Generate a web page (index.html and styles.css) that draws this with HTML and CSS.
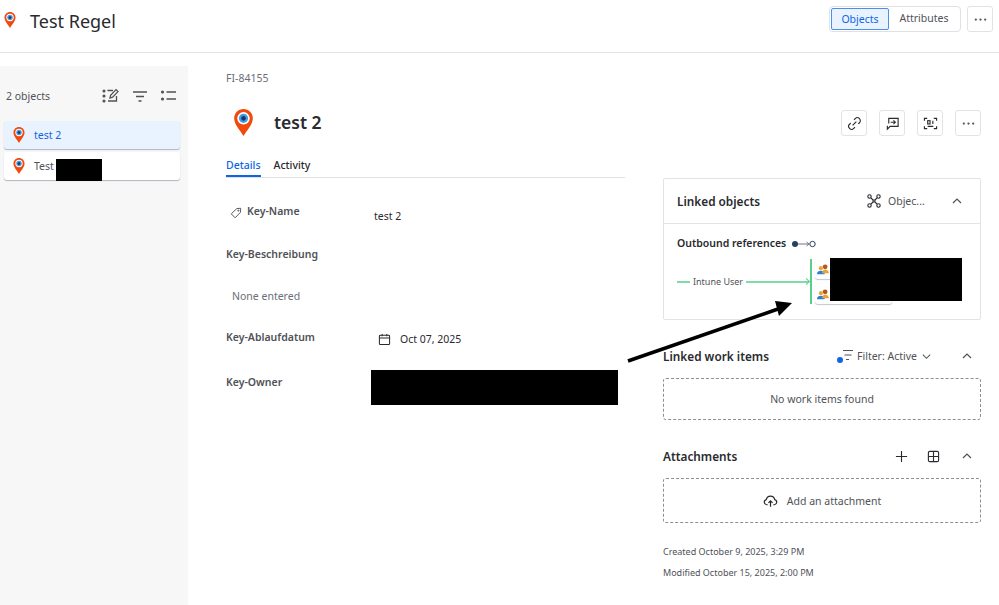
FILE: index.html
```html
<!DOCTYPE html>
<html lang="en">
<head>
  <meta charset="UTF-8" />
  <title>Test Regel</title>
  <link rel="stylesheet" href="styles.css">
</head>
<body>
  <svg class="defs" width="0" height="0">
    <symbol id="pin" viewBox="0 0 18 26">
      <path fill="#f2490c" d="M9 0C4 0 0 4 0 9c0 6 6 12 9 17 3-5 9-11 9-17 0-5-4-9-9-9z"/>
      <circle cx="9" cy="9" r="6" fill="#fff"/>
      <circle cx="9" cy="9" r="4.4" fill="#3f9be8"/>
      <circle cx="9" cy="9" r="2.2" fill="#17375e"/>
    </symbol>
    <symbol id="more" viewBox="0 0 16 16">
      <circle cx="3" cy="8" r="1.2"/><circle cx="8" cy="8" r="1.2"/><circle cx="13" cy="8" r="1.2"/>
    </symbol>
    <symbol id="up" viewBox="0 0 12 12">
      <path d="M2 8l4-4 4 4" fill="none" stroke="currentColor" stroke-width="1.2"/>
    </symbol>
    <symbol id="people" viewBox="0 0 14 12">
      <circle cx="4.5" cy="5" r="2.4" fill="#e8a33c"/>
      <path d="M0 12c0-3 2-4 4.5-4S9 9 9 12z" fill="#2f7fd0"/>
      <circle cx="9.5" cy="3.5" r="2.8" fill="#b8571a"/>
      <path d="M6 11c0-3 1.500-4.500 3.500-4.500S14 8 14 11z" fill="#e8a33c"/>
    </symbol>
  </svg>

  <header class="topbar">
    <div class="topbar-title">
      <svg class="pin-small"><use href="#pin"/></svg>
      <h1>Test Regel</h1>
    </div>
    <div class="topbar-actions">
      <div class="segmented">
        <span class="seg seg-on">Objects</span>
        <span class="seg">Attributes</span>
      </div>
      <button class="icon-btn icon-btn-lg"><svg class="ico ico-dots"><use href="#more"/></svg></button>
    </div>
  </header>

  <div class="page">
    <aside class="sidebar">
      <div class="sidebar-head">
        <span>2 objects</span>
        <div class="sidebar-tools">
          <svg class="tool" viewBox="0 0 18 18" fill="none" stroke="#505258" stroke-width="1.300">
            <path d="M6 4V3.500h5M6 14h8.500V9"/>
            <path d="M8 11l.6-2.800L14 2.600l2 2-5.400 5.600z"/>
            <circle cx="2" cy="4" r=".9" fill="#505258"/><circle cx="2" cy="9" r=".9" fill="#505258"/><circle cx="2" cy="14" r=".9" fill="#505258"/>
          </svg>
          <svg class="tool" viewBox="0 0 18 18" fill="none" stroke="#505258" stroke-width="1.300">
            <path d="M2 5h14M5 9.500h8M7.500 14h3"/>
          </svg>
          <svg class="tool" viewBox="0 0 18 18" fill="none" stroke="#505258" stroke-width="1.300">
            <path d="M6.500 5H16M6.500 12H16"/>
            <circle cx="2.500" cy="5" r=".9" fill="#505258"/><circle cx="2.500" cy="12" r=".9" fill="#505258"/>
          </svg>
        </div>
      </div>
      <div class="obj obj-on"><svg class="pin-small"><use href="#pin"/></svg>test 2</div>
      <div class="obj"><svg class="pin-small"><use href="#pin"/></svg>Test</div>
    </aside>

    <main class="main">
      <div class="key">FI-84155</div>
      <div class="main-title">
        <svg class="pin-big"><use href="#pin"/></svg>
        <h2>test 2</h2>
      </div>
      <nav class="tabs">
        <span class="tab tab-on">Details</span>
        <span class="tab">Activity</span>
      </nav>
      <div class="fields">
        <div class="field field-name">
          <div class="label">
            <svg class="tag" viewBox="0 0 14 14" fill="none" stroke="#505258" stroke-width="1.100"><path d="M1.500 8L8 1.800l4.500-.3-.3 4.700L6 12.600z"/><circle cx="9.800" cy="4.200" r=".7"/></svg>
            Key-Name
          </div>
          <div class="value value-name">test 2</div>
        </div>
        <div class="label label-solo">Key-Beschreibung</div>
        <div class="none">None entered</div>
        <div class="field field-date">
          <div class="label">Key-Ablaufdatum</div>
          <div class="value value-date">
            <svg class="cal" viewBox="0 0 14 14" fill="none" stroke="#292a2e" stroke-width="1.100"><rect x="1.500" y="2.500" width="11" height="10" rx="1"/><path d="M1.500 5.500h11M4.500 1v2.500M9.500 1v2.500"/></svg>
            Oct 07, 2025
          </div>
        </div>
        <div class="label label-solo label-owner">Key-Owner</div>
      </div>
    </main>

    <section class="rail">
      <div class="rail-btns">
        <button class="icon-btn">
          <svg class="ico" viewBox="0 0 16 16" fill="none" stroke="#292a2e" stroke-width="1.200"><path d="M6 10l4-4M7.500 4l1.300-1.300a3 3 0 0 1 4.500 4.500L12 8.500M8.500 12l-1.300 1.300a3 3 0 0 1-4.500-4.500L4 7.500"/></svg>
        </button>
        <button class="icon-btn">
          <svg class="ico" viewBox="0 0 16 16" fill="none" stroke="#292a2e" stroke-width="1.200"><path d="M4 8V2.500h10V11H5.500L2.500 14v-3.500M6 6.700h5M9 4.700l2 2-2 2"/></svg>
        </button>
        <button class="icon-btn">
          <svg class="ico" viewBox="0 0 16 16" fill="none" stroke="#292a2e" stroke-width="1.200"><path d="M1.500 5V2.500h3M11.500 2.500h3V5M14.500 11v2.500h-3M4.500 13.500h-3V11"/><rect x="5" y="5" width="2.500" height="3.500"/><path d="M10.500 5v3.500M5 11h6"/></svg>
        </button>
        <button class="icon-btn"><svg class="ico ico-dots"><use href="#more"/></svg></button>
      </div>

      <div class="card">
        <div class="card-head">
          <h3>Linked objects</h3>
          <svg class="graph" viewBox="0 0 14 14" fill="none" stroke="#292a2e" stroke-width="1.100"><circle cx="2.500" cy="2.500" r="1.700"/><circle cx="11.500" cy="2.500" r="1.700"/><circle cx="2.500" cy="11.500" r="1.700"/><circle cx="11.500" cy="11.500" r="1.700"/><path d="M4 4l2 2h2l2-2M4 10l2-2h2l2 2M6 6v2M8 6v2"/></svg>
          <span class="card-view">Objec...</span>
          <svg class="chev"><use href="#up"/></svg>
        </div>
        <div class="card-body">
          <div class="out-title">Outbound references
            <svg class="out-ico" viewBox="0 0 26 10" fill="none"><circle cx="4" cy="5" r="3" fill="#2c3e5d"/><path d="M7 5h11M15.500 3l2.500 2-2.500 2" stroke="#6b778c"/><circle cx="21.500" cy="5" r="2.700" stroke="#2c3e5d"/></svg>
          </div>
          <div class="refs">
            <span class="ref-dash"></span>
            <span class="ref-name">Intune User</span>
            <span class="ref-line"></span>
            <div class="ref-list">
              <div class="ref-item"><svg class="people"><use href="#people"/></svg></div>
              <div class="ref-item"><svg class="people"><use href="#people"/></svg></div>
            </div>
          </div>
        </div>
      </div>

      <div class="sec-head sec-work">
        <h3>Linked work items</h3>
        <div class="filter">
          <svg class="filter-ico" viewBox="0 0 20 14" fill="none" stroke="#505258" stroke-width="1.200"><path d="M8 1.500h10M9.500 6h7M11 10.500h3"/><circle cx="5" cy="11" r="3" fill="#0c66e4" stroke="none"/></svg>
          Filter: Active
          <svg class="filter-chev" viewBox="0 0 12 12" fill="none" stroke="#505258" stroke-width="1.100"><path d="M2 4l4 4 4-4"/></svg>
        </div>
        <svg class="chev"><use href="#up"/></svg>
      </div>
      <div class="dashed dashed-work">No work items found</div>

      <div class="sec-head sec-att">
        <h3>Attachments</h3>
        <svg class="att-ico" viewBox="0 0 14 14" fill="none" stroke="#292a2e" stroke-width="1.200"><path d="M7 1v12M1 7h12"/></svg>
        <svg class="att-ico" viewBox="0 0 14 14" fill="none" stroke="#292a2e" stroke-width="1.200"><rect x="1.500" y="1.500" width="11" height="11" rx="1.500"/><path d="M7 1.500v11M1.500 7h11"/></svg>
        <svg class="chev"><use href="#up"/></svg>
      </div>
      <div class="dashed dashed-att">
        <svg class="upload" viewBox="0 0 16 14" fill="none" stroke="#292a2e" stroke-width="1.300"><path d="M5 11H3.800a2.800 2.800 0 0 1-.3-5.500 4.600 4.600 0 0 1 9 0 2.800 2.800 0 0 1-.3 5.500H11M8 13V7M5.800 9L8 6.800 10.200 9"/></svg>
        Add an attachment
      </div>
      <div class="stamp stamp-first">Created October 9, 2025, 3:29 PM</div>
      <div class="stamp">Modified October 15, 2025, 2:00 PM</div>
    </section>
  </div>

  <!-- blacked out parts and the arrow drawn on top of the screenshot -->
  <div class="redact r-test"></div>
  <div class="redact r-owner"></div>
  <div class="redact r-refs"></div>
  <svg class="arrow" viewBox="0 0 999 605">
    <path d="M628 361L778 309" stroke="#000" stroke-width="3.500" fill="none"/>
    <path d="M792 303L775 301L779 316z" fill="#000"/>
  </svg>
</body>
</html>
```

FILE: styles.css
```css
html, body {
  margin: 0; padding: 0; height: 100%;
  font-family: 'Noto Sans', 'Open Sans', Arial, sans-serif;
  color: #292a2e; background: #fff;
  overflow: hidden;
}
.defs { position: absolute; }
h1, h2, h3 { margin: 0; }

/* top bar */
.topbar {
  height: 52px;
  border-bottom: 1px solid #e2e3e5;
  display: flex;
  justify-content: space-between;
}
.topbar-title { display: flex; align-items: flex-start; padding: 10px 0 0 4px; }
.topbar-title .pin-small { margin: 2px 0 0 0; }
.topbar-title h1 { font-size: 18px; font-weight: 400; color: #292a2e; margin-left: 14px; line-height: 22px; }
.topbar-actions { display: flex; gap: 6px; padding: 6px 6px 0 0; }
.segmented {
  display: flex; height: 26px; width: 132px; box-sizing: border-box;
  border: 1px solid #dfe1e4; border-radius: 4px;
  font-size: 10.500px; line-height: 20px; color: #505258;
  padding: 1px;
}
.seg { text-align: center; flex: 1; }
.seg-on {
  flex: none; width: 58px; box-sizing: border-box;
  background: #e9f2ff; color: #0c66e4;
  border: 1px solid #4c8fe8; border-radius: 2px;
}
.icon-btn {
  width: 26px; height: 26px; padding: 0;
  border: 1px solid #e2e3e5; border-radius: 3px; background: #fff;
  display: flex; align-items: center; justify-content: center;
}
.ico { width: 15px; height: 15px; }
.ico-dots { fill: #505258; }

/* three columns */
.page { display: flex; padding-top: 13px; }

.sidebar {
  width: 188px; height: 539px; flex: none;
  background: #f7f7f7; box-sizing: border-box;
  padding: 0 8px 0 4px;
}
.sidebar-head {
  display: flex; align-items: center; justify-content: space-between;
  height: 55px; padding: 5px 2px 1px 2px; box-sizing: border-box;
  font-size: 10.500px; color: #505258;
}
.sidebar-tools { display: flex; gap: 11px; }
.tool { width: 18px; height: 18px; }
.obj {
  display: flex; align-items: center;
  height: 28px; margin-bottom: 3px; padding-left: 9px;
  background: #fff; border-radius: 3px;
  box-shadow: 0 1px 1px rgba(9,30,66,.3);
  font-size: 10.500px; color: #505258;
}
.obj .pin-small { margin-right: 9px; }
.obj-on { background: #e9f2ff; color: #0c66e4; }
.pin-small { width: 12px; height: 16px; flex: none; }

.main { width: 399px; margin-left: 38px; flex: none; }
.key { font-size: 10.500px; color: #6b6e76; line-height: 14px; margin-top: 5px; }
.main-title { display: flex; align-items: center; margin-top: 22px; height: 30px; padding-left: 8px; }
.pin-big { width: 19px; height: 27px; }
.main-title h2 { font-size: 17.500px; font-weight: 600; color: #292a2e; margin-left: 21px; }
.tabs {
  display: flex; gap: 13px; margin-top: 20px;
  border-bottom: 1px solid #dfe1e4; height: 20px;
  font-size: 10.500px; font-weight: 500; line-height: 16px;
}
.tab { height: 20px; box-sizing: border-box; }
.tab-on { color: #0c66e4; border-bottom: 2px solid #0c66e4; }

.fields { font-size: 10.500px; }
.field { display: flex; }
.label { font-weight: 600; color: #505258; line-height: 16px; width: 148px; flex: none; }
.label-solo { width: auto; }
.value { line-height: 16px; color: #292a2e; }
.field-name { margin-top: 25px; }
.field-name .label { padding-left: 4px; box-sizing: border-box; display: flex; align-items: center; height: 16px; }
.tag { width: 12px; height: 12px; margin-right: 5px; margin-top: 3px; }
.value-name { margin-top: 5px; }
.fields > .label-solo { margin-top: 22px; }
.none { color: #6b6e76; margin: 26px 0 0 6px; line-height: 16px; }
.field-date { margin-top: 25px; }
.value-date { display: flex; align-items: center; padding-left: 4px; margin-top: 2px; }
.cal { width: 13px; height: 13px; margin-right: 9px; }
.fields > .label-owner { margin-top: 27px; }

/* right column */
.rail { width: 318px; margin-left: 38px; flex: none; }
.rail-btns { display: flex; gap: 12px; justify-content: flex-end; margin-top: 44px; height: 68px; }
.card { border: 1px solid #e2e3e5; border-radius: 2px; height: 142px; box-sizing: border-box; }
.card-head {
  display: flex; align-items: center; height: 44px;
  padding: 0 17px 0 13px; border-bottom: 1px solid #e2e3e5;
  font-size: 10.500px;
}
.card-head h3 { flex: 1; font-size: 11.800px; font-weight: 600; color: #292a2e; }
.graph { width: 14px; height: 14px; margin-right: 7px; }
.card-view { width: 63px; color: #505258; }
.chev { width: 12px; height: 12px; color: #505258; flex: none; }
.card-body { padding: 11px 13px 0; }
.out-title { font-size: 10.500px; font-weight: 600; color: #292a2e; line-height: 17px; display: flex; align-items: center; gap: 5px; }
.out-ico { width: 26px; height: 10px; }
.refs { display: flex; align-items: center; margin-top: 7px; height: 45px; font-size: 9px; color: #505258; }
.ref-dash { width: 13px; height: 2px; background: #7fdca8; }
.ref-name { margin: 0 3px; }
.ref-line { width: 63px; height: 2px; background: #7fdca8; position: relative; }
.ref-line::after {
  content: ""; position: absolute; right: 0; top: -2px;
  width: 5px; height: 5px; box-sizing: border-box;
  border-top: 1px solid #57d08a; border-right: 1px solid #57d08a;
  transform: rotate(45deg);
}
.ref-list {
  margin-left: 1px; padding-left: 3px;
  border-left: 2px solid #57d08a;
  display: flex; flex-direction: column; gap: 5px;
}
.ref-item {
  width: 77px; height: 20px;
  border-radius: 3px; background: #fff;
  box-shadow: 0 1px 1px rgba(9,30,66,.25);
  display: flex; align-items: center; padding-left: 2px; box-sizing: border-box;
}
.people { width: 12px; height: 12px; }

.sec-head { display: flex; align-items: center; height: 18px; }
.sec-head h3 { flex: 1; font-size: 11.800px; font-weight: 600; color: #292a2e; }
.sec-head .chev { margin: 0 8px 0 0; }
.sec-work { margin-top: 27px; }
.filter { display: flex; align-items: center; font-size: 10.500px; color: #505258; margin-right: 29px; }
.filter-ico { width: 20px; height: 14px; margin-right: 2px; }
.filter-chev { width: 11px; height: 11px; margin-left: 4px; }
.dashed {
  border: 1px dashed #8c8f97; border-radius: 3px;
  display: flex; align-items: center; justify-content: center;
  font-size: 10.500px; color: #505258;
  box-sizing: border-box;
}
.dashed-work { height: 42px; margin-top: 13px; }
.sec-att { margin-top: 27px; }
.att-ico { width: 13px; height: 13px; margin-right: 19px; }
.sec-att .chev { margin-left: 2px; }
.dashed-att { height: 45px; margin-top: 13px; }
.upload { width: 15px; height: 14px; margin-right: 9px; }
.stamp { font-size: 9px; line-height: 13px; color: #505258; margin-top: 8px; }
.stamp-first { margin-top: 22px; }

/* redactions and arrow, they sit over the page */
.redact { position: absolute; background: #000; }
.r-test { left: 56px; top: 159px; width: 46px; height: 22px; }
.r-owner { left: 371px; top: 370px; width: 247px; height: 35px; }
.r-refs { left: 830px; top: 258px; width: 132px; height: 43px; }
.arrow { position: absolute; left: 0; top: 0; width: 999px; height: 605px; pointer-events: none; }
```
